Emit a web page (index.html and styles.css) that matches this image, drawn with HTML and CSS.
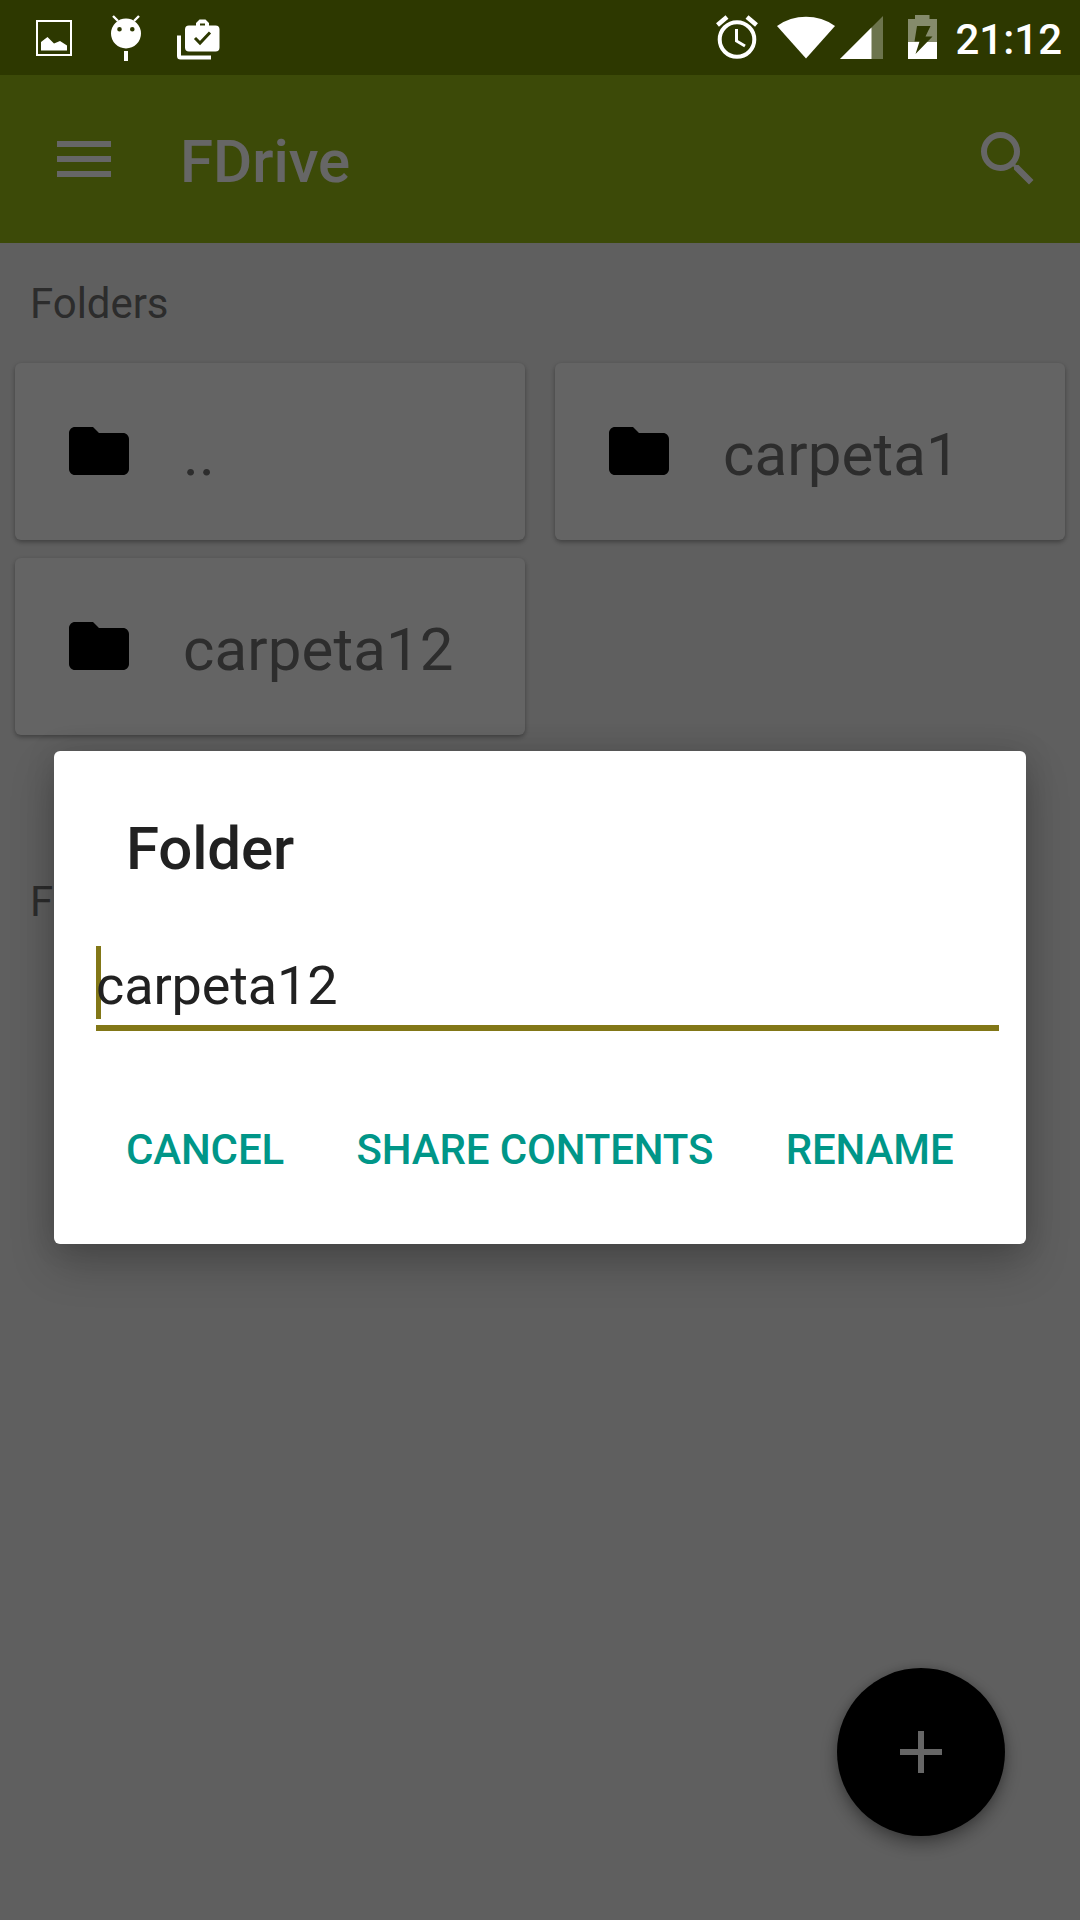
FILE: index.html
```html
<!DOCTYPE html>
<html lang="en">
<head>
<meta charset="utf-8">
<title>FDrive</title>
<link rel="stylesheet" href="styles.css">
</head>
<body>
<div class="screen">
  <header class="status-bar">
    <div class="notifications">
      <svg class="icon-picture" width="36" height="36" viewBox="0 0 36 36"><rect x="1" y="1" width="34" height="34" fill="none" stroke="currentColor" stroke-width="2"/><path d="M5 30.500V22l6.500-5 6.500 6.500 6-2.500 7 4.500v5z" fill="currentColor"/></svg>
      <svg class="icon-android" width="32" height="46" viewBox="0 0 32 46"><path d="M3 1l5 5M29 1l-5 5" stroke="currentColor" stroke-width="2.400" fill="none"/><path fill="currentColor" fill-rule="evenodd" d="M16 3.500a15 15 0 1 1 0 30a15 15 0 1 1 0-30zM9.500 12a2.300 2.300 0 1 0 0 4.600a2.300 2.300 0 1 0 0-4.600zM22.300 12a2.300 2.300 0 1 0 0 4.600a2.300 2.300 0 1 0 0-4.600z"/><path fill="currentColor" d="M14 36h4v10h-4z"/></svg>
      <svg class="icon-work" width="43" height="41" viewBox="0 0 43 41"><path d="M0 16.500h4v20h30v4H3.500a3.500 3.500 0 0 1-3.500-3.500z" fill="currentColor"/><path fill="currentColor" fill-rule="evenodd" d="M12 6.500h7V4L22.500.500h6L32 4v2.500h6.500a4 4 0 0 1 4 4v18a4 4 0 0 1-4 4H12a4 4 0 0 1-4-4v-18a4 4 0 0 1 4-4zM23 6.500h5v-2h-5z"/><path class="cutout" d="M18 19l5 5L33 13.500" fill="none" stroke-width="3"/></svg>
    </div>
    <div class="indicators">
      <svg width="42" height="44" viewBox="0 0 42 44"><g fill="none" stroke="currentColor"><circle cx="21" cy="24.500" r="17.300" stroke-width="4"/><path d="M20.500 14v12l8.500 5" stroke-width="3"/><path d="M1.500 10L11 2M40.500 10L31 2" stroke-width="4.500"/></g></svg>
      <svg class="icon-wifi" width="58" height="43" viewBox="0 0 58 43"><path d="M0 10A50 50 0 0 1 58 10L29 42.500z" fill="currentColor"/></svg>
      <svg class="icon-signal" width="43" height="43" viewBox="0 0 43 43"><path d="M0 43L43 0v43z" fill="currentColor" opacity=".3"/><path d="M0 43L31.500 11.500V43z" fill="currentColor"/></svg>
      <svg class="icon-battery" width="29" height="44" viewBox="0 0 29 44"><path opacity=".42" fill="currentColor" d="M0 4h7V0h14.500v4H29v23H0z"/><path fill="currentColor" d="M0 27h29v17H0z"/><path class="bolt" d="M9 11h13.500l-5 10.500h7L7.500 39l4-12.500H6.500z"/></svg>
      <span class="clock">21:12</span>
    </div>
  </header>

  <nav class="toolbar">
    <svg width="72" height="72" viewBox="0 0 24 24"><path fill="currentColor" d="M3 18h18v-2H3v2zm0-5h18v-2H3v2zm0-7v2h18V6H3z"/></svg>
    <h1 class="toolbar-title">FDrive</h1>
    <svg width="72" height="72" viewBox="0 0 24 24"><path fill="currentColor" d="M15.500 14h-.79l-.28-.27A6.471 6.471 0 0 0 16 9.500 6.500 6.500 0 1 0 9.500 16c1.610 0 3.090-.59 4.230-1.570l.27.28v.79l5 4.990L20.490 19l-4.990-5zm-6 0C7.010 14 5 11.990 5 9.500S7.010 5 9.500 5 14 7.010 14 9.500 11.990 14 9.500 14z"/></svg>
  </nav>

  <main class="content">
    <h2 class="section-label">Folders</h2>
    <div class="folder-grid">
      <div class="card"><svg class="card-icon" width="72" height="72" viewBox="0 0 24 24"><path d="M10 4H4c-1.100 0-2 .900-2 2v12c0 1.100.900 2 2 2h16c1.100 0 2-.900 2-2V8c0-1.100-.900-2-2-2h-8l-2-2z"/></svg><span class="card-name">..</span></div>
      <div class="card"><svg class="card-icon" width="72" height="72" viewBox="0 0 24 24"><path d="M10 4H4c-1.100 0-2 .900-2 2v12c0 1.100.900 2 2 2h16c1.100 0 2-.900 2-2V8c0-1.100-.900-2-2-2h-8l-2-2z"/></svg><span class="card-name">carpeta1</span></div>
      <div class="card"><svg class="card-icon" width="72" height="72" viewBox="0 0 24 24"><path d="M10 4H4c-1.100 0-2 .900-2 2v12c0 1.100.900 2 2 2h16c1.100 0 2-.900 2-2V8c0-1.100-.900-2-2-2h-8l-2-2z"/></svg><span class="card-name">carpeta12</span></div>
    </div>
    <h2 class="section-label files-label">F</h2>
  </main>

  <div class="fab"><svg width="72" height="72" viewBox="0 0 24 24"><path fill="currentColor" d="M19 13h-6v6h-2v-6H5v-2h6V5h2v6h6z"/></svg></div>

  <div class="scrim">
    <section class="dialog">
      <h2 class="dialog-title">Folder</h2>
      <div class="field"><span class="caret"></span><span class="field-text">carpeta12</span></div>
      <div class="actions">
        <span class="action">CANCEL</span>
        <span class="action">SHARE CONTENTS</span>
        <span class="action">RENAME</span>
      </div>
    </section>
  </div>
</div>
</body>
</html>
```
FILE: styles.css
```css
* { box-sizing: border-box; }
body { margin: 0; font-family: Roboto, sans-serif; }
h1, h2 { margin: 0; }
svg { display: block; flex: none; }

.screen {
  position: relative;
  width: 1080px;
  height: 1920px;
  overflow: hidden;
  background: #eee;
}

/* The status bar stays above the scrim so its icons keep full brightness */
.status-bar {
  position: relative;
  z-index: 2;
  display: flex;
  justify-content: space-between;
  height: 75px;
  padding: 15px 18px 0 36px;
  background: #2d3800;
  color: #fff;
}
.notifications, .indicators { display: flex; align-items: flex-start; }
.icon-picture { margin-top: 5px; }
.icon-android { margin-left: 38px; }
.icon-work { margin: 3.500px 0 0 35px; }
.cutout { stroke: #2d3800; }
.bolt { fill: #2d3800; }
.icon-wifi { margin: 1px 0 0 19px; }
.icon-signal { margin: 1px 0 0 5px; }
.icon-battery { margin-left: 25px; }
.clock {
  margin: 0 0 0 18px;
  font-size: 42px;
  font-weight: 500;
  line-height: 50px;
}

.toolbar {
  display: flex;
  align-items: center;
  height: 168px;
  padding: 0 36px 0 48px;
  background: #96b914;
  color: #fff;
}
.toolbar-title {
  flex: 1;
  padding: 6px 0 0 60px;
  font-size: 60px;
  font-weight: 500;
  line-height: 70px;
}

.section-label {
  padding: 31px 0 0 30px;
  color: #6e6e6e;
  font-size: 42px;
  font-weight: 400;
  letter-spacing: -.05px;
  line-height: 60px;
}
.folder-grid {
  display: grid;
  grid-template-columns: 510px 510px;
  grid-auto-rows: 177px;
  gap: 18px 30px;
  margin: 29px 15px 0;
}
.files-label { padding-top: 137px; }
.card {
  display: flex;
  align-items: center;
  padding-left: 48px;
  border-radius: 6px;
  background: #fafafa;
  box-shadow: 0 2px 5px rgba(0, 0, 0, .35);
}
.card-icon { margin-bottom: 1px; }
.card-name {
  padding: 7px 0 0 48px;
  color: #707070;
  font-size: 60px;
  letter-spacing: .12px;
  line-height: 70px;
}

.fab {
  position: absolute;
  top: 1668px;
  left: 837px;
  display: flex;
  align-items: center;
  justify-content: center;
  width: 168px;
  height: 168px;
  border-radius: 50%;
  background: #000;
  color: #fff;
  box-shadow: 0 8px 18px rgba(0, 0, 0, .35), 0 0 10px rgba(0, 0, 0, .15);
}

.scrim {
  position: absolute;
  inset: 0;
  padding: 751px 54px 0;
  background: rgba(0, 0, 0, .6);
}
.dialog {
  height: 493px;
  padding: 63px 27px 0 42px;
  border-radius: 6px;
  background: #fff;
  color: #212121;
  box-shadow: 0 20px 44px rgba(0, 0, 0, .23), 0 0 30px rgba(0, 0, 0, .12);
}
.dialog-title {
  padding-left: 30px;
  font-size: 60px;
  font-weight: 500;
  letter-spacing: -.15px;
  line-height: 70px;
}
.field {
  position: relative;
  height: 85px;
  margin-top: 62px;
  padding-top: 8px;
  border-bottom: 6px solid #827717;
  font-size: 54px;
  letter-spacing: -.12px;
  line-height: 64px;
}
.field-text { position: relative; }
.caret {
  position: absolute;
  top: 0;
  left: 0;
  width: 5px;
  height: 73px;
  background: #827717;
}
.actions {
  display: flex;
  gap: 72.500px;
  padding: 89px 0 0 30px;
  color: #009688;
  font-size: 42px;
  font-weight: 500;
  letter-spacing: -.15px;
  line-height: 60px;
  white-space: nowrap;
}
```
